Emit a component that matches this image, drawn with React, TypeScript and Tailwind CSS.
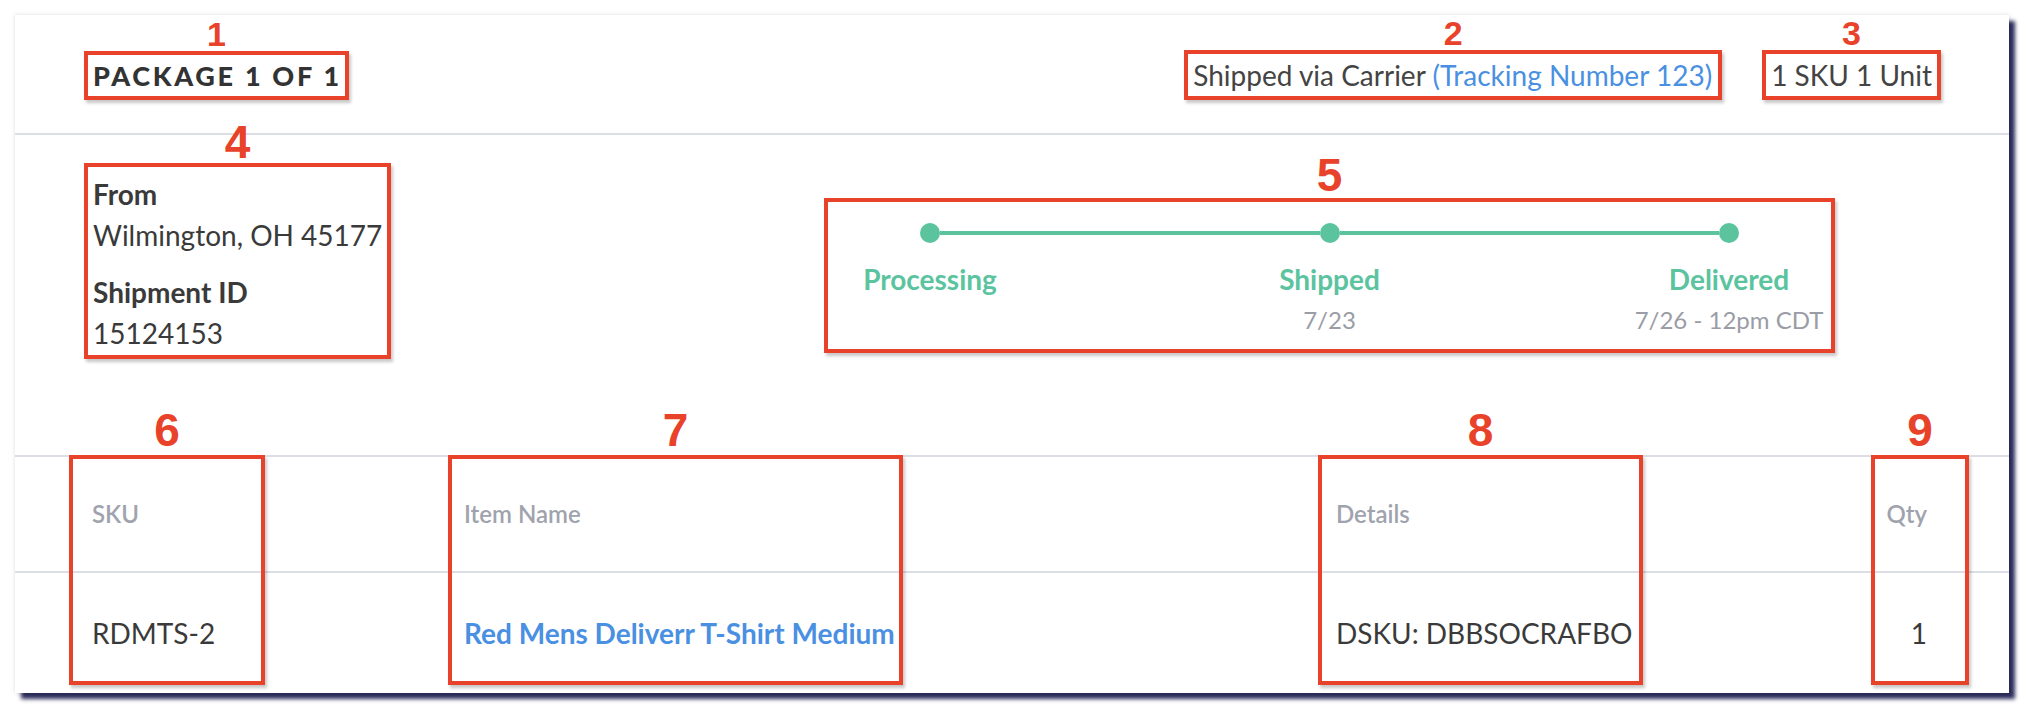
import type { ReactNode } from "react";

const RED = "border-[#e8432a]";

function Annot({
    n,
    big,
    pos = "relative",
    gap = "mb-[4px]",
    className = "",
    children,
}: {
    n: number;
    big?: boolean;
    pos?: string;
    gap?: string;
    className?: string;
    children?: ReactNode;
}) {
    return (
        <div className={`${pos} border-4 ${RED} shadow-[2px_3px_3px_rgba(0,0,0,0.22)] ${className}`}>
            <span
                className={`absolute left-1/2 -translate-x-1/2 bottom-full ${gap} leading-none font-bold text-[#e8432a] font-['Liberation_Sans_Narrow','Liberation_Sans',sans-serif] ${big ? "text-[46px]" : "text-[34px]"}`}
            >
                {n}
            </span>
            {children}
        </div>
    );
}

export default function App() {
    return (
        <div className="bg-white w-[2034px] h-[720px] pt-[15px] pl-[15px] font-[Lato,sans-serif] text-[#3a3a3a]">
            <div className="w-[1994px] h-[678px] bg-white flex flex-col shadow-[0_0_4px_rgba(0,0,0,0.14),6px_6px_4px_#2c2d5b]">
                {/* package header */}
                <div className="h-[120px] flex items-center justify-between pl-[69px] pr-[68px] pt-[2px] border-b-2 border-[#dcdee6]">
                    <Annot n={1} className="pl-[5px] pr-[3px]">
                        <div className="h-[41px] leading-[41px] text-[27px] font-black uppercase tracking-[2.7px] text-[#333]">
                            Package 1 of 1
                        </div>
                    </Annot>
                    <div className="flex items-center gap-[40px]">
                        <Annot n={2} className="pl-[5px] pr-[6px]">
                            <div className="h-[42px] leading-[42px] text-[28px] text-[#444]">
                                Shipped via Carrier <a className="text-[#4a90e2]">(Tracking Number 123)</a>
                            </div>
                        </Annot>
                        <Annot n={3} className="px-[5px]">
                            <div className="h-[42px] leading-[42px] text-[28px] text-[#444]">1 SKU 1 Unit</div>
                        </Annot>
                    </div>
                </div>

                {/* origin + progress */}
                <div className="h-[320px] flex items-start pl-[69px] pt-[28px]">
                    <Annot n={4} big gap="mb-[2px]" className="w-[307px] h-[196px] pl-[5px] pt-[7px] text-[28px] leading-[41px]">
                        <div className="font-bold">From</div>
                        <div>Wilmington, OH 45177</div>
                        <div className="font-bold mt-[16px]">Shipment ID</div>
                        <div>15124153</div>
                    </Annot>

                    <Annot n={5} big gap="mb-[4px]" className="ml-[433px] mt-[35px] w-[1011px] h-[155px] pt-[21px]">
                        <div className="flex items-center px-[92px]">
                            <div className="w-[20px] h-[20px] rounded-full bg-[#5bc49f]" />
                            <div className="flex-1 h-[4px] bg-[#5bc49f]" />
                            <div className="w-[20px] h-[20px] rounded-full bg-[#5bc49f]" />
                            <div className="flex-1 h-[4px] bg-[#5bc49f]" />
                            <div className="w-[20px] h-[20px] rounded-full bg-[#5bc49f]" />
                        </div>
                        <div className="grid grid-cols-[204px_1fr_204px] mt-[19px] text-center">
                            <div className="text-[28px] leading-[34px] font-bold text-[#5bc49f]">Processing</div>
                            <div className="text-[28px] leading-[34px] font-bold text-[#5bc49f]">Shipped</div>
                            <div className="text-[28px] leading-[34px] font-bold text-[#5bc49f]">Delivered</div>
                            <div />
                            <div className="mt-[9px] text-[24px] leading-[30px] text-[#9a9ca6]">7/23</div>
                            <div className="mt-[9px] text-[24px] leading-[30px] text-[#9a9ca6] whitespace-nowrap">7/26 - 12pm CDT</div>
                        </div>
                    </Annot>
                </div>

                {/* items table */}
                <div className="relative flex-1 flex flex-col">
                    <div className="h-[116px] grid grid-cols-[372px_872px_1fr_auto] items-center pl-[77px] pr-[82px] border-t-2 border-[#dcdee6] text-[24px] font-semibold text-[#a0a3ad]">
                        <div>SKU</div>
                        <div>Item Name</div>
                        <div>Details</div>
                        <div className="text-right">Qty</div>
                    </div>
                    <div className="flex-1 grid grid-cols-[372px_872px_1fr_auto] items-center pl-[77px] pr-[82px] border-t-2 border-[#dcdee6] text-[28px]">
                        <div>RDMTS-2</div>
                        <div className="font-bold text-[#4a90e2]">Red Mens Deliverr T-Shirt Medium</div>
                        <div>DSKU: DBBSOCRAFBO</div>
                        <div className="text-right">1</div>
                    </div>

                    <Annot n={6} big pos="absolute" gap="mb-[6px]" className="top-0 left-[54px] w-[196px] h-[230px]" />
                    <Annot n={7} big pos="absolute" gap="mb-[6px]" className="top-0 left-[433px] w-[455px] h-[230px]" />
                    <Annot n={8} big pos="absolute" gap="mb-[6px]" className="top-0 left-[1303px] w-[325px] h-[230px]" />
                    <Annot n={9} big pos="absolute" gap="mb-[6px]" className="top-0 left-[1856px] w-[98px] h-[230px]" />
                </div>
            </div>
        </div>
    );
}
